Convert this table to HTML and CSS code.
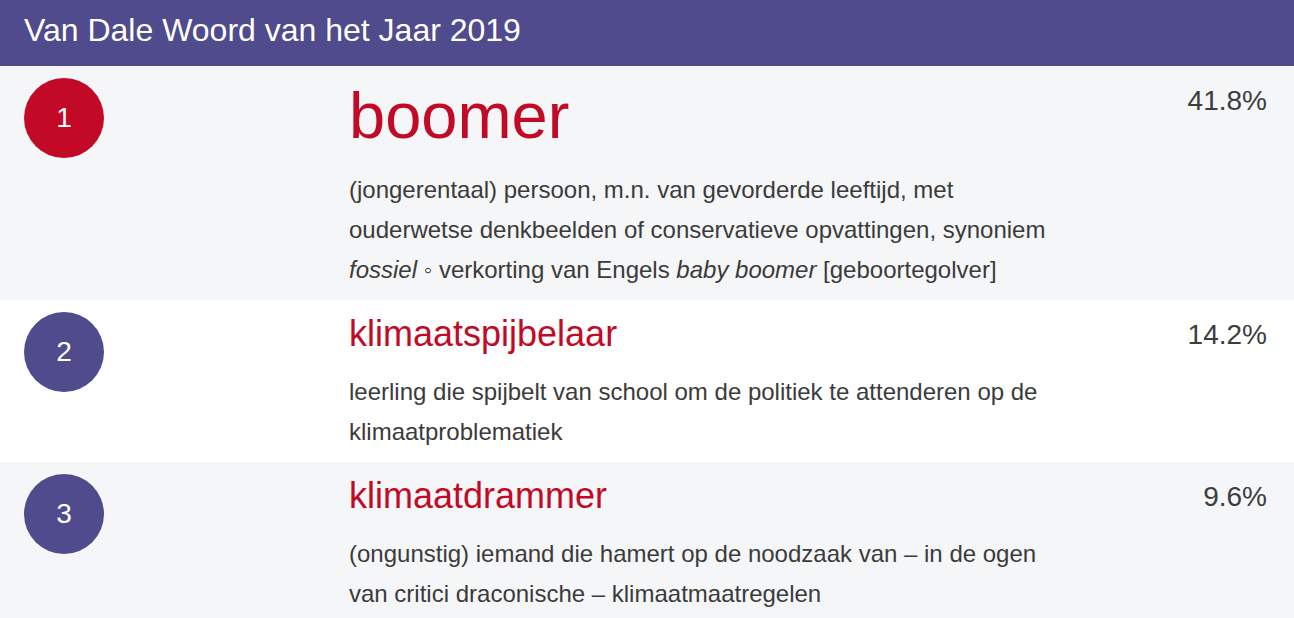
FILE: index.html
```html
<!DOCTYPE html>
<html lang="nl">
<head>
  <meta charset="UTF-8">
  <title>Van Dale Woord van het Jaar 2019</title>
  <link rel="stylesheet" href="styles.css">
</head>
<body>
  <div class="header">
    <h1>Van Dale Woord van het Jaar 2019</h1>
  </div>

  <div class="results">
    <div class="row winner">
      <div class="rank"><span class="circle">1</span></div>
      <div class="entry">
        <div class="word">boomer</div>
        <p class="definition">(jongerentaal) persoon, m.n. van gevorderde leeftijd, met ouderwetse denkbeelden of conservatieve opvattingen, synoniem <em>fossiel</em> ◦ verkorting van Engels <em>baby boomer</em> [geboortegolver]</p>
      </div>
      <div class="percent">41.8%</div>
    </div>

    <div class="row">
      <div class="rank"><span class="circle">2</span></div>
      <div class="entry">
        <div class="word">klimaatspijbelaar</div>
        <p class="definition">leerling die spijbelt van school om de politiek te attenderen op de klimaatproblematiek</p>
      </div>
      <div class="percent">14.2%</div>
    </div>

    <div class="row">
      <div class="rank"><span class="circle">3</span></div>
      <div class="entry">
        <div class="word">klimaatdrammer</div>
        <p class="definition">(ongunstig) iemand die hamert op de noodzaak van – in de ogen van critici draconische – klimaatmaatregelen</p>
      </div>
      <div class="percent">9.6%</div>
    </div>
  </div>
</body>
</html>
```

FILE: styles.css
```css
body {
  margin: 0;
  padding: 0;
  background: #f5f6f8;
  font-family: "Liberation Sans", Arial, sans-serif;
  color: #3b3b3b;
}
/* Purple title bar */
.header {
  background: #4f4b8c;
  padding: 11px 24px 17px;
}
.header h1 {
  margin: 0;
  font-size: 32px;
  line-height: 38px;
  font-weight: normal;
  color: #fff;
}
/* One row per word, alternating background */
.row {
  display: grid;
  grid-template-columns: 325px 1fr auto;
  padding: 12px 27px 10px 24px;
  background: #f5f6f8;
}
.row:nth-child(even) {
  background: #fff;
}
.circle {
  display: flex;
  align-items: center;
  justify-content: center;
  width: 80px;
  height: 80px;
  border-radius: 50%;
  background: #4f4b8c;
  color: #fff;
  font-size: 28px;
}
.winner .circle {
  background: #c20a27;
}
.word {
  color: #c20a27;
  font-size: 36px;
  line-height: 44px;
}
.winner .word {
  font-size: 65px;
  line-height: 76px;
}
.definition {
  margin: 16px 0 0;
  max-width: 712px;
  font-size: 24px;
  line-height: 40px;
}
.percent {
  font-size: 28px;
  line-height: 46px;
  color: #3d3d3d;
  text-align: right;
}
```
